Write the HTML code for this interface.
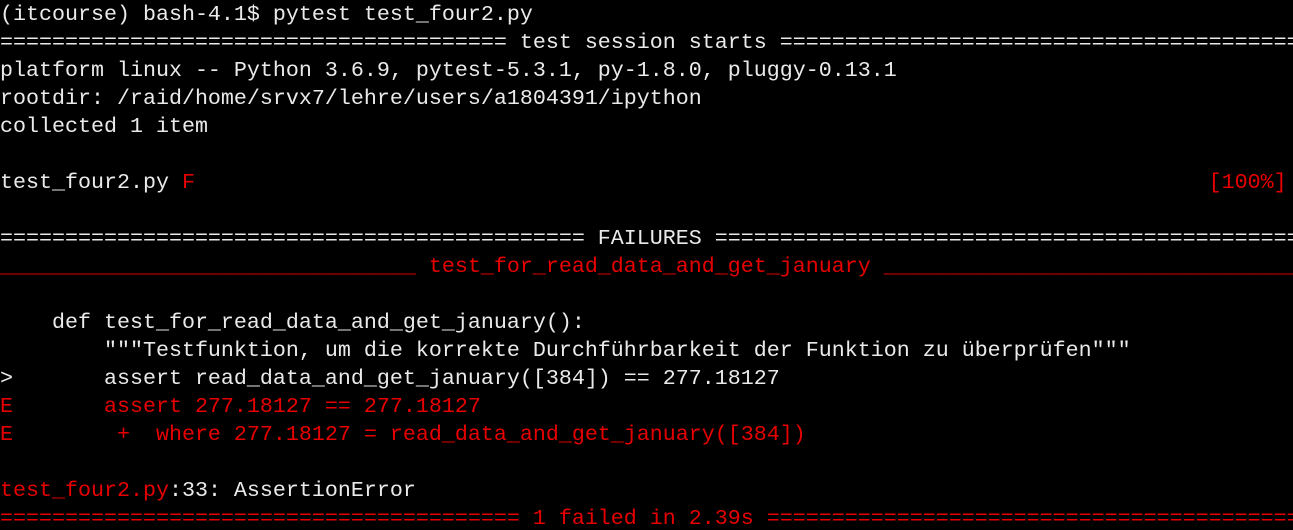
<!DOCTYPE html>
<html><head><meta charset="utf-8"><style>
html,body{margin:0;padding:0;background:#000;width:1293px;height:530px;overflow:hidden}
pre{margin:0;padding:1px 0 0 0;font-family:"Liberation Mono",monospace;font-size:21.67px;line-height:28px;color:#eaeaea;white-space:pre;overflow:hidden;width:1293px}
.r{color:#e60000}
</style></head><body><pre>(itcourse) bash-4.1$ pytest test_four2.py
======================================= test session starts ==========================================
platform linux -- Python 3.6.9, pytest-5.3.1, py-1.8.0, pluggy-0.13.1
rootdir: /raid/home/srvx7/lehre/users/a1804391/ipython
collected 1 item

test_four2.py <span class="r">F</span>                                                                              <span class="r">[100%]</span>

============================================= FAILURES ===============================================
<span class="r">________________________________ test_for_read_data_and_get_january __________________________________</span>

    def test_for_read_data_and_get_january():
        """Testfunktion, um die korrekte Durchführbarkeit der Funktion zu überprüfen"""
&gt;       assert read_data_and_get_january([384]) == 277.18127
<span class="r">E       assert 277.18127 == 277.18127</span>
<span class="r">E        +  where 277.18127 = read_data_and_get_january([384])</span>

<span class="r">test_four2.py</span>:33: AssertionError
<span class="r">======================================== 1 failed in 2.39s ===========================================</span></pre></body></html>
